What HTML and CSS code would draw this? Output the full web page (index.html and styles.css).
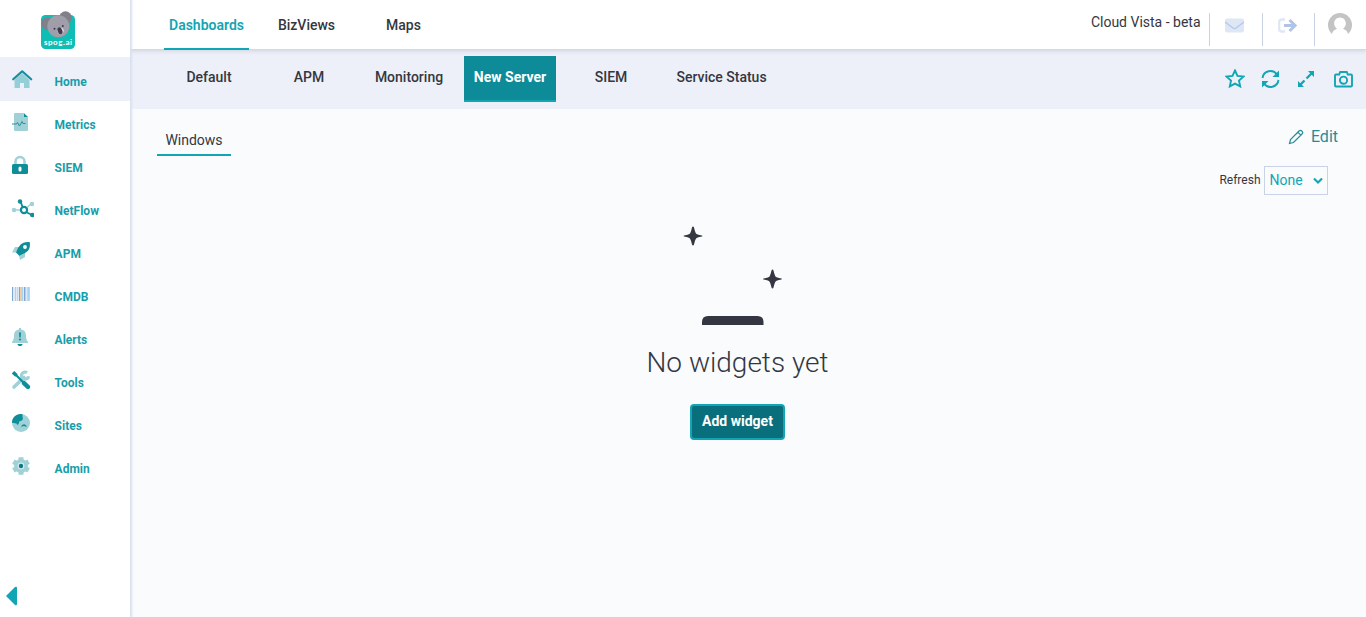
FILE: index.html
```html
<!DOCTYPE html>
<html lang="en">
<head>
<meta charset="utf-8">
<title>Dashboards</title>
<link rel="stylesheet" href="styles.css">
</head>
<body>
<div class="app">
  <aside class="sidebar">
    <div class="logo">
      <svg width="36" height="40" viewBox="0 0 36 40">
        <rect x="1" y="4" width="34" height="34" rx="4.5" fill="#10bdb5"/>
        <circle cx="7.800" cy="12.500" r="6.300" fill="#807f8a"/>
        <circle cx="25.500" cy="6.600" r="6.300" fill="#807f8a"/>
        <circle cx="18.300" cy="15.300" r="11" fill="#a09fa9"/>
        <path d="M17 20q2-4 5-3 3 2 1 5-2 2-4 1z" fill="#e4e0e3"/>
        <ellipse cx="20" cy="19.800" rx="2.300" ry="3.500" transform="rotate(-22 20 19.800)" fill="#403a50"/>
        <circle cx="14.500" cy="17.800" r="1" fill="#403a50"/><circle cx="22.800" cy="14.900" r="1" fill="#403a50"/>
        <text class="logo-text" x="4" y="34.200" textLength="28">spog.ai</text>
      </svg>
    </div>
    <nav class="menu">
      <a class="item active"><svg class="ico" viewBox="0 0 24 20"><path fill="#94ced6" d="M12 4l7.500 7v8H14v-5h-4v5H4.500V11z"/><path fill="none" stroke="#158e9e" stroke-width="2.200" stroke-linecap="round" stroke-linejoin="round" d="M3.200 10.300L12.200 2.300l9 8"/></svg><span>Home</span></a>
      <a class="item"><svg class="ico" viewBox="0 0 24 20"><path fill="#a0d1d6" d="M5 1h8.500v4H18v13q0 1-1 1H5q-1 0-1-1V2q0-1 1-1z"/><path fill="#0d8e99" d="M13.800 1L18 5h-4.200z"/><path fill="none" stroke="#2a8d98" d="M2 12h4.500l1-1.500L9.500 14l2.500-4.500 1 2h2.500"/></svg><span>Metrics</span></a>
      <a class="item"><svg class="ico" viewBox="0 0 24 20"><path fill="none" stroke="#a0d1d6" stroke-width="2.500" d="M5.500 9.500V6.500a4.500 4.500 0 0 1 9 0v3"/><rect x="2" y="9" width="16" height="10" rx="1.500" fill="#0d8e99"/><rect x="8.500" y="11.500" width="3" height="5" rx="1.500" fill="#fff"/></svg><span>SIEM</span></a>
      <a class="item"><svg class="ico" viewBox="0 0 24 20"><path stroke="#a0d1d6" fill="none" d="M4 12h8M15 11l6-5" stroke-width="1.400"/><path stroke="#0d8e99" fill="none" stroke-width="1.900" d="M10.500 3.500L13 10m3 4l6 3"/><g fill="#a0d1d6"><circle cx="4" cy="12" r="2.200"/><circle cx="22" cy="6" r="2.300"/></g><g fill="#0d8e99"><circle cx="10" cy="3.500" r="2.200"/><circle cx="22.300" cy="17" r="2.300"/></g><circle cx="14" cy="12" r="3.100" fill="#fff" stroke="#0d8e99" stroke-width="2.200"/></svg><span>NetFlow</span></a>
      <a class="item"><svg class="ico" viewBox="0 0 24 20"><path fill="#a0d1d6" d="M10 6H5l-3 5.500h5zM15 11v5l-5 3-1-5z"/><path fill="#0d8e99" d="M19.800 1.200c-7-1-10 3-12 6.300L6 11.500l3.300 3.300 4-2c5-2 7.300-5 6.500-11.600z"/><circle cx="15" cy="6" r="1.900" fill="#fff"/></svg><span>APM</span></a>
      <a class="item"><svg class="ico" viewBox="0 0 24 20"><path fill="#dcebf5" d="M3 3h17v14H3z"/><path stroke="#7fa5d0" d="M2.500 3v14M9.500 3v14M14.500 3v14"/><path stroke="#a9d2f4" d="M5.500 3v14M12.500 3v14M15.500 3v14M18.500 3v14"/><path stroke="#f2cda0" d="M7.500 3v14M10.500 3v14M17.500 3v14"/><path stroke="#c8d3df" d="M11.500 3v14M19.500 3v14"/></svg><span>CMDB</span></a>
      <a class="item"><svg class="ico" viewBox="0 0 24 20"><path fill="#a0d1d6" d="M9 1h2v1.500c3.500.5 5 3 5 6 0 3.500.8 5 2 6.500v1H2v-1c1.200-1.500 2-3 2-6.500 0-3 1.500-5.500 5-6z"/><path fill="#0d8e99" d="M7.500 17h5c0 2.700-5 2.700-5 0M9 5.500h2l-.3 5H9.300z"/><circle cx="10" cy="12.500" r="1.100" fill="#0d8e99"/></svg><span>Alerts</span></a>
      <a class="item"><svg class="ico" viewBox="0 0 24 20"><path fill="none" stroke="#a0d1d6" stroke-width="3.600" stroke-linecap="round" d="M4 17L14 7.500"/><path fill="none" stroke="#a0d1d6" stroke-width="3.200" d="M17 2.600a3.600 3.600 0 1 0 1.600 3.600"/><path stroke="#0d8e99" stroke-width="2.200" d="M4 3l11 11"/><path stroke="#0d8e99" stroke-width="4.400" stroke-linecap="round" d="M14 13.200l3.900 3.700"/><path stroke="#0d8e99" stroke-width="3.600" d="M3 2.200L6.500 5.500"/></svg><span>Tools</span></a>
      <a class="item"><svg class="ico" viewBox="0 0 24 20"><circle cx="11" cy="10" r="9" fill="#a0d1d6"/><path fill="#0d8e99" d="M12.500 1.200C7 0 2 4 2 9.700l4.500.8.7 1.500 1.500-1 .5-2.500 2.300-.8 1.500-1.700-.5-2zM11 13.700c1-3.200 5-3.700 5.700.3l-2.700-1z"/></svg><span>Sites</span></a>
      <a class="item"><svg class="ico" viewBox="0 0 24 20"><circle cx="11" cy="10" r="6.900" fill="#a0d1d6"/><path stroke="#a0d1d6" stroke-width="5" d="M11 1.200v17.600M3.400 5.600l15.200 8.800M3.400 14.400l15.200-8.800"/><circle cx="11" cy="10" r="3.400" fill="#d3eaed"/><circle cx="11" cy="10" r="2.200" fill="#0d7886"/></svg><span>Admin</span></a>
    </nav>
    <div class="collapse"><svg width="12" height="20" viewBox="0 0 12 20"><path fill="#12a5b3" d="M0 10L9 1q2-1 2 1v16q0 2-2 1z"/></svg></div>
  </aside>
  <main class="main">
    <header class="topbar">
      <nav class="tabs"><a class="tab on">Dashboards</a><a class="tab biz">BizViews</a><a class="tab maps">Maps</a></nav>
      <div class="account">
        <span class="name">Cloud Vista - beta</span>
        <span class="cell"><svg width="19" height="15" viewBox="0 0 19 15"><rect width="19" height="14" y="0.500" rx="2" fill="#dee7f5"/><path d="M0 4l8 6q1.500 1 3 0l8-6" fill="none" stroke="#b5c7e8" stroke-width="1.300"/></svg></span>
        <span class="cell exit"><svg width="19" height="15" viewBox="0 0 19 15"><path d="M7 1.500H4Q1.200 1.500 1.200 4v7Q1.200 13.500 4 13.500h3" fill="none" stroke="#dee7f5" stroke-width="2.300"/><path d="M6 7.500h11M11.500 2l5.700 5.500-5.700 5.500" fill="none" stroke="#b0c3e8" stroke-width="3"/></svg></span>
        <span class="cell user"><svg width="24" height="24" viewBox="0 0 24 24"><path fill="#c4c4c4" d="M4 21A12 12 0 1 1 20 21c-.6-2.500-2-4-5-5.200C20 12 18 4.500 12 4.500S4 12 9 15.800C6 17 4.600 18.500 4 21z"/></svg></span>
      </div>
    </header>
    <div class="subbar">
      <nav class="views"><a class="w90">Default</a><a class="w110">APM</a><a class="w90">Monitoring</a><a class="selected">New Server</a><a class="w110">SIEM</a><a class="w111">Service Status</a></nav>
      <div class="actions">
        <svg width="20" height="20" viewBox="0 0 20 20"><path d="M10 1.500l2.500 5.400 5.900.7-4.400 4 1.200 5.800L10 14.600l-5.200 2.800L6 11.600l-4.400-4 5.900-.7z"/></svg>
        <svg width="20" height="20" viewBox="0 0 20 20"><path d="M1.500 9A8 8 0 0 1 16 5.500M17.500 11A8 8 0 0 1 3 14.500"/><path class="solid" d="M18 1.500v6.500h-6.500zM1 18.500V12h6.500z"/></svg>
        <svg width="20" height="20" viewBox="0 0 20 20"><path stroke-width="2.300" d="M3 16l4.500-4.500M9.500 9.500L15 4"/><path class="solid" d="M11 2h6v6zM1 12v6h6z"/></svg>
        <svg width="20" height="20" viewBox="0 0 20 20"><path d="M3 5.500h3.200l1-2.500h6.600l1 2.500h3.200Q19 5.500 19 6.500v10q0 1-1 1H3q-1 0-1-1v-10q0-1 1-1z"/><circle cx="10.500" cy="11.200" r="3.600"/></svg>
      </div>
    </div>
    <div class="tools">
      <a class="pane">Windows</a>
      <div class="controls">
        <div class="edit"><svg width="16" height="16" viewBox="0 0 16 16"><path d="M1.500 14.500l1-4L11 2q1.500-1.200 3 .2T14 5l-8.500 8.500zM9.800 3.200l3 3" fill="none" stroke="#248c99" stroke-width="1.200"/></svg><span>Edit</span></div>
        <div class="refresh"><span>Refresh</span><div class="select">None<svg width="10" height="7" viewBox="0 0 10 7"><path d="M1 1.500l4 4 4-4" fill="none" stroke="#12a5b3" stroke-width="2.100"/></svg></div></div>
      </div>
    </div>
    <section class="empty">
      <svg class="art" width="90" height="99" viewBox="0 0 90 99"><g fill="#343741"><path id="spark" d="M15 .5q.7 0 1 1 1.300 5.800 2.600 6.600 1.100.7 5.200 1.500.7.200.7.400t-.7.400q-4.100.8-5.200 1.500-1.300.8-2.600 6.600-.3 1-1 1t-1-1q-1.300-5.800-2.600-6.600-1.100-.7-5.200-1.500-.7-.2-.7-.4t.7-.4q4.100-.8 5.200-1.500 1.300-.8 2.600-6.600.3-1 1-1z"/><use href="#spark" x="79.500" y="43"/><path d="M24 99v-3q0-6 6-6h49.500q6 0 6 6v3z"/></g></svg>
      <h1>No widgets yet</h1>
      <button class="add">Add widget</button>
    </section>
  </main>
</div>
</body>
</html>
```
FILE: styles.css
```css
* { box-sizing: border-box; }
body { margin: 0; font-family: Roboto, "Liberation Sans", sans-serif; font-size: 14px; color: #343741; background: #fafbfd; }
.app { display: flex; height: 617px; overflow: hidden; }
.sidebar { width: 130px; flex: none; display: flex; flex-direction: column; background: #fff; box-shadow: 1px 0 2px 1px #d9e0ee; z-index: 2; }
.logo { height: 57px; padding: 11px 0 0 40px; }
.logo-text { font: 700 8px Lato, sans-serif; fill: #fff; }
.menu { flex: 1; }
.item { display: flex; align-items: flex-start; height: 43px; padding: 12px 0 0 10px; color: #189daa; font-size: 12px; font-weight: 700; line-height: 16px; }
.item span { padding-top: 5px; }
.item.active { background: #edf0f8; box-shadow: 0 1px #edf0f8; }
.ico { width: 24px; height: 20px; flex: none; margin-right: 20.6px; }
.collapse { height: 31px; padding-left: 6px; }
.main { flex: 1; display: flex; flex-direction: column; }
.topbar { height: 50px; display: flex; justify-content: space-between; background: #fff; border-bottom: 1px solid #d3dae6; box-shadow: 0 1px 4px #cbd2de; z-index: 1; }
.tabs { display: flex; height: 50px; padding-left: 34px; font-weight: 500; }
.tab { line-height: 50px; text-align: center; }
.tab.on { width: 85px; color: #12a5b3; border-bottom: 2px solid #12a5b3; font-weight: 600; }
.tab.biz { width: 115px; }
.tab.maps { width: 79px; }
.account { display: flex; padding-top: 13px; }
.name { padding: 1px 8.5px 0 0; line-height: 17px; }
.cell { width: 53px; height: 33px; border-left: 1px solid #cad3e6; padding: 5px 0 0 15px; }
.cell.exit { width: 52px; }
.cell.user { width: 52px; padding: 0 0 0 13px; }
.subbar { height: 59px; background: #edf0f8; display: flex; justify-content: space-between; align-items: flex-start; padding-top: 6px; }
.views { display: flex; padding-left: 34px; font-weight: 500; line-height: 42px; text-align: center; }
.w90 { width: 90px; }
.w110 { width: 110px; }
.w111 { width: 111px; }
.views .selected { width: 92px; height: 46px; margin: 0 0 0 10px; color: #fff; background: #0d8b99; border-bottom: 2px solid #12a5b3; font-weight: 700; }
.actions { display: flex; gap: 16px; padding: 13px 13px 0 0; }
.actions svg { fill: none; stroke: #12a5b3; stroke-width: 1.9; }
.actions .solid { fill: #12a5b3; stroke: none; }
.tools { display: flex; justify-content: space-between; height: 90px; padding-left: 27px; }
.pane { width: 74px; height: 47px; padding-top: 22px; text-align: center; line-height: 19px; border-bottom: 2px solid #12a5b3; }
.controls { padding-top: 15px; }
.edit { display: flex; justify-content: flex-end; align-items: center; gap: 7px; height: 25px; padding-right: 28px; font-size: 16px; color: #248c99; }
.refresh { display: flex; align-items: center; gap: 3.5px; margin-top: 17px; padding-right: 38px; font-size: 12px; }
.refresh > span { padding-bottom: 2px; }
.select { display: flex; align-items: center; justify-content: space-between; width: 64px; height: 29px; padding: 0 4px 1px 4.5px; font-size: 14px; color: #12a5b3; border: 1px solid #cad3e6; }
.empty { display: flex; flex-direction: column; align-items: center; padding: 27px 21px 0 0; }
.art { width: 90px; height: 99px; margin-right: 29px; overflow: visible; }
h1 { margin: 18px 0 0; font-size: 28px; font-weight: 300; line-height: 40px; }
.add { width: 95px; height: 36px; margin-top: 21px; padding: 0 0 2px; border: 2px solid #12a5b3; border-radius: 4px; background: #0a6f7d; color: #fff; font: 700 14px Roboto, sans-serif; }
```
